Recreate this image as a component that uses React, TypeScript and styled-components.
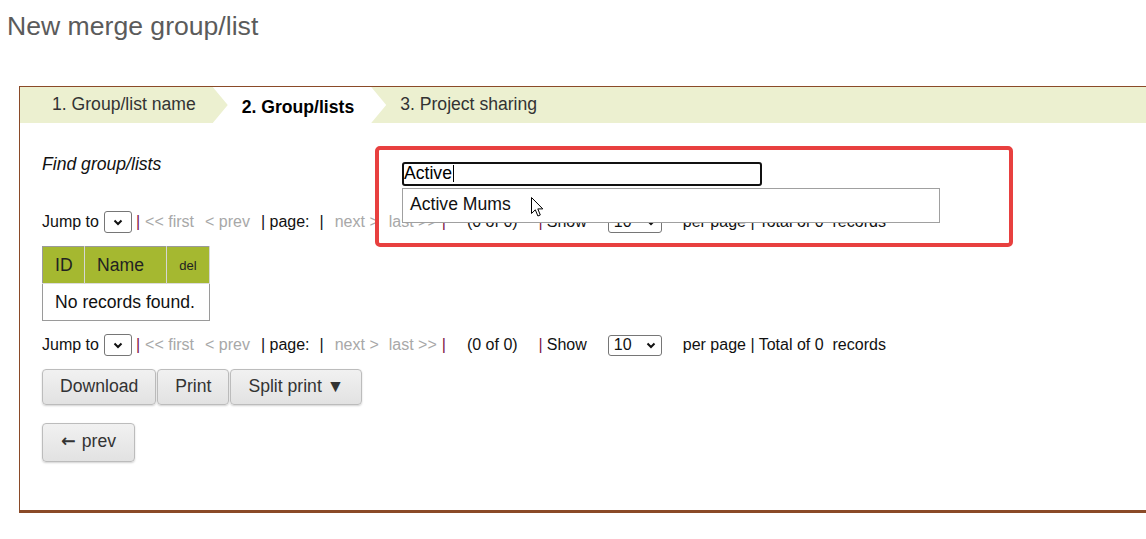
import React from "react";
import styled, { createGlobalStyle } from "styled-components";

const Global = createGlobalStyle`
  html, body { margin: 0; padding: 0; overflow: hidden; background: #fff; }
  body { font-family: "Liberation Sans", Arial, sans-serif; color: #111; }
`;

const BROWN = "#8a4a28";

const Title = styled.h1`
  margin: 0;
  padding: 10px 0 0 7px;
  font-size: 26.6px;
  font-weight: normal;
  line-height: 32px;
  color: #5b5b5b;
`;

const Panel = styled.div`
  position: relative;
  margin: 44px 0 0 19px;
  border-top: 1px solid ${BROWN};
  border-left: 1px solid ${BROWN};
  border-bottom: 3px solid ${BROWN};
`;

const TabBar = styled.div`
  display: flex;
  height: 36px;
  background: #ecf0d0;
`;

type TabKind = "first" | "active" | "rest";

const Tab = styled.div<{ $kind: TabKind }>`
  box-sizing: border-box;
  height: 36px;
  font-size: 17.6px;
  line-height: 20px;
  white-space: nowrap;
  color: ${(p) => (p.$kind === "active" ? "#000" : "#333")};
  font-weight: ${(p) => (p.$kind === "active" ? "bold" : "normal")};
  padding: ${(p) =>
    p.$kind === "first"
      ? "7px 17px 0 32px"
      : p.$kind === "active"
      ? "10px 32px 0 29px"
      : "7px 0 0 14px"};
  background: ${(p) => (p.$kind === "active" ? "#fff" : "transparent")};
  clip-path: ${(p) =>
    p.$kind === "active"
      ? "polygon(0 0, calc(100% - 15px) 0, 100% 50%, calc(100% - 15px) 100%, 0 100%, 15px 50%)"
      : "none"};
`;

const Content = styled.div`
  display: flex;
  flex-direction: column;
  align-items: flex-start;
  padding: 0 22px 48px;
`;

const FindRow = styled.div`
  display: flex;
  margin-top: 31px;
`;

const FindLabel = styled.div`
  width: 360px;
  font-size: 17.6px;
  line-height: 20px;
  font-style: italic;
  color: #111;
`;

const InputWrap = styled.div`
  position: relative;
  margin-top: 8px;
`;

const SearchInput = styled.input`
  display: block;
  box-sizing: border-box;
  width: 360px;
  height: 24px;
  border: 2px solid #111;
  border-radius: 3px;
  padding: 0 0 1px;
  font-family: "Liberation Sans", Arial, sans-serif;
  font-size: 17.6px;
  color: #000;
  outline: none;
`;

const Caret = styled.span`
  position: absolute;
  left: 51px;
  top: 3px;
  width: 1px;
  height: 17px;
  background: #000;
`;

const Suggest = styled.div`
  position: absolute;
  top: calc(100% + 2px);
  left: 0;
  z-index: 2;
  box-sizing: border-box;
  width: 538px;
  height: 35px;
  display: flex;
  align-items: center;
  padding: 0 0 2px 7px;
  border: 1px solid #a0a0a0;
  background: #fff;
  font-size: 17.6px;
  color: #111;
`;

const Pager = styled.div<{ $mt: number }>`
  display: flex;
  align-items: center;
  height: 22px;
  margin-top: ${(p) => p.$mt}px;
  font-size: 16px;
  white-space: nowrap;
`;

type Tone = "text" | "muted" | "sep";

const PagerItem = styled.span<{ $ml: number; $tone?: Tone }>`
  margin-left: ${(p) => p.$ml}px;
  color: ${(p) =>
    p.$tone === "muted" ? "#a8a8a8" : p.$tone === "sep" ? "#7d1446" : "#111"};
`;

const SelectBox = styled.span<{ $w: number; $h: number; $ml: number }>`
  box-sizing: border-box;
  display: inline-flex;
  align-items: center;
  justify-content: ${(p) => (p.$w > 40 ? "space-between" : "center")};
  width: ${(p) => p.$w}px;
  height: ${(p) => p.$h}px;
  margin-left: ${(p) => p.$ml}px;
  padding: 0 5px;
  border: 1px solid #767676;
  border-radius: 3px;
  font-size: 16px;
  color: #111;
  background: #fff;
`;

const Chevron = () => (
  <svg width="10" height="7" viewBox="0 0 10 7">
    <path d="M1.5 1.5 L5 5 L8.5 1.5" fill="none" stroke="#111" strokeWidth="2" />
  </svg>
);

const Table = styled.table`
  margin-top: 13px;
  border-collapse: collapse;
  table-layout: fixed;
  width: 167px;
  border: 1px solid #9a9a9a;
  font-size: 17.6px;
`;

const Th = styled.th<{ $small?: boolean }>`
  height: 36px;
  padding: ${(p) => (p.$small ? "0" : "0 0 0 12px")};
  background: #a5b830;
  border-right: 1px solid #d6d6d6;
  font-weight: normal;
  text-align: ${(p) => (p.$small ? "center" : "left")};
  font-size: ${(p) => (p.$small ? "13px" : "17.6px")};
  color: #222;
`;

const Td = styled.td`
  height: 36px;
  padding: 0 0 0 12px;
  border-top: 1px solid #dcdcdc;
  color: #111;
  white-space: nowrap;
`;

const ButtonRow = styled.div`
  display: flex;
  gap: 1px;
  margin-top: 13px;
`;

const Button = styled.button<{ $tall?: boolean; $mt?: number }>`
  box-sizing: border-box;
  height: ${(p) => (p.$tall ? 39 : 36)}px;
  margin-top: ${(p) => p.$mt ?? 0}px;
  padding: 0 ${(p) => (p.$tall ? 18 : 17)}px 2px;
  font-family: "Liberation Sans", Arial, sans-serif;
  font-size: 17.6px;
  color: #333;
  background: linear-gradient(#f1f1f1, #e2e2e2);
  border: 1px solid #bcbcbc;
  border-radius: 4px;
  box-shadow: 0 1px 2px rgba(0, 0, 0, 0.18);
  white-space: nowrap;
`;

const Arrow = styled.span`
  font-family: "DejaVu Sans", sans-serif;
  font-weight: bold;
  font-size: 17.6px;
  margin-right: 6px;
`;

const Highlight = styled.div`
  position: absolute;
  left: 355px;
  top: 59px;
  box-sizing: border-box;
  width: 638px;
  height: 101px;
  border: 4px solid #e8403f;
  border-radius: 5px;
  pointer-events: none;
  z-index: 3;
`;

const Pointer = styled.svg`
  position: absolute;
  left: 511px;
  top: 110px;
  z-index: 4;
`;

function PagerRow({ mt }: { mt: number }) {
  return (
    <Pager $mt={mt}>
      <PagerItem $ml={0}>Jump to</PagerItem>
      <SelectBox $w={28} $h={22} $ml={5}>
        <Chevron />
      </SelectBox>
      <PagerItem $ml={4} $tone="sep">|</PagerItem>
      <PagerItem $ml={5} $tone="muted">&lt;&lt; first</PagerItem>
      <PagerItem $ml={11} $tone="muted">&lt; prev</PagerItem>
      <PagerItem $ml={11}>| page:</PagerItem>
      <PagerItem $ml={10}>|</PagerItem>
      <PagerItem $ml={11} $tone="muted">next &gt;</PagerItem>
      <PagerItem $ml={10} $tone="muted">last &gt;&gt;</PagerItem>
      <PagerItem $ml={5} $tone="sep">|</PagerItem>
      <PagerItem $ml={21}>(0 of 0)</PagerItem>
      <PagerItem $ml={21} $tone="sep">|</PagerItem>
      <PagerItem $ml={4}>Show</PagerItem>
      <SelectBox $w={54} $h={21} $ml={21}>
        <span>10</span>
        <Chevron />
      </SelectBox>
      <PagerItem $ml={21}>per page | Total of 0&nbsp; records</PagerItem>
    </Pager>
  );
}

export default function App() {
  return (
    <>
      <Global />
      <Title>New merge group/list</Title>
      <Panel>
        <TabBar>
          <Tab $kind="first">1. Group/list name</Tab>
          <Tab $kind="active">2. Group/lists</Tab>
          <Tab $kind="rest">3. Project sharing</Tab>
        </TabBar>
        <Content>
          <FindRow>
            <FindLabel>Find group/lists</FindLabel>
            <InputWrap>
              <SearchInput value="Active" readOnly />
              <Caret />
              <Suggest>Active Mums</Suggest>
            </InputWrap>
          </FindRow>
          <PagerRow mt={25} />
          <Table>
            <colgroup>
              <col style={{ width: 42 }} />
              <col style={{ width: 82 }} />
              <col style={{ width: 43 }} />
            </colgroup>
            <thead>
              <tr>
                <Th>ID</Th>
                <Th>Name</Th>
                <Th $small>del</Th>
              </tr>
            </thead>
            <tbody>
              <tr>
                <Td colSpan={3}>No records found.</Td>
              </tr>
            </tbody>
          </Table>
          <PagerRow mt={13} />
          <ButtonRow>
            <Button>Download</Button>
            <Button>Print</Button>
            <Button>Split print ▼</Button>
          </ButtonRow>
          <Button $tall $mt={18}>
            <Arrow>←</Arrow>prev
          </Button>
        </Content>
        <Highlight />
        <Pointer width="13" height="21" viewBox="0 0 13 21">
          <path
            d="M0.5 0.5 L0.5 16.5 L4.3 12.8 L6.9 19 L9.3 18 L6.8 11.9 L11.8 11.9 Z"
            fill="#fff"
            stroke="#000"
            strokeWidth="1"
            strokeLinejoin="round"
          />
        </Pointer>
      </Panel>
    </>
  );
}
